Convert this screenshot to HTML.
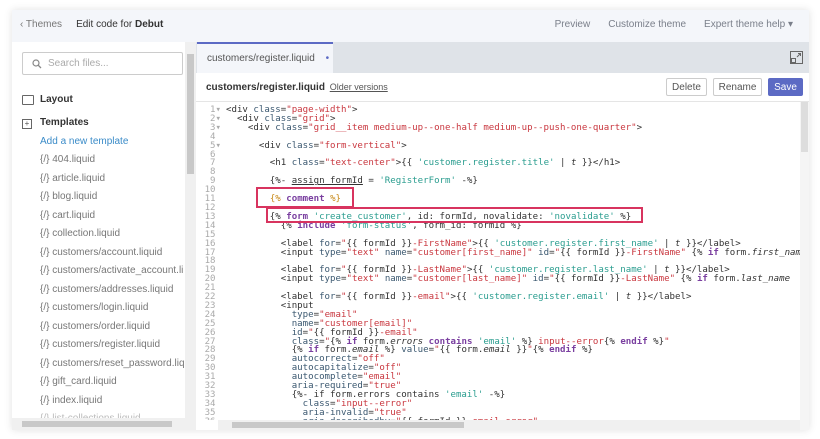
<!DOCTYPE html>
<html><head><meta charset="utf-8"><style>
*{box-sizing:border-box;margin:0;padding:0}
body{width:820px;height:439px;background:#fff;font-family:"Liberation Sans",sans-serif;position:relative;overflow:hidden}
.frame{position:absolute;left:12px;top:10px;width:797px;height:420px;background:#f4f6fa;box-shadow:0 0 8px rgba(0,0,0,.12);overflow:hidden}
.hdr{position:absolute;left:0;top:0;width:797px;height:32px;font-size:10px;color:#333}
.hdr .l{position:absolute;left:8px;top:9px}
.hdr .l span.t{color:#777;margin-right:14px}
.hdr .r{position:absolute;right:16px;top:9px;color:#7a7f8a}
.hdr .r span{margin-left:18px}
.side{position:absolute;left:0;top:32px;width:173px;height:388px;background:#fff;font-size:10px;color:#777}
.search{position:absolute;left:10px;top:10px;width:161px;height:23px;border:1px solid #ccc;border-radius:2px;color:#aaa;padding:5px 0 0 25px}
.it{position:absolute;left:28px;white-space:nowrap}
.sb{position:absolute;left:173px;top:32px;width:11px;height:388px;background:#f0f0f0}
.ed{position:absolute;left:184px;top:32px;width:613px;height:388px;background:#fff}
.tabs{position:absolute;left:0;top:0;width:613px;height:31px;background:#dfe3e8}
.tab{position:absolute;left:1px;top:0;width:136px;height:31px;background:#f4f6fa;border-top:2px solid #5c6ac4;font-size:10px;color:#555;padding:9px 0 0 10px}
.tb{position:absolute;left:0;top:31px;width:613px;height:29px;background:#fff;border-bottom:1px solid #e5e5e5}
.btn{position:absolute;top:5px;height:18px;border:1px solid #ccc;border-radius:2px;font-size:10px;color:#555;padding:3px 0 0;text-align:center}
.code{position:absolute;left:0;top:60px;width:604px;height:318px;overflow:hidden;font-family:"DejaVu Sans Mono",monospace;font-size:9.1px;line-height:8.9px;white-space:pre;color:#333}
.gut{position:absolute;left:0;top:4px;width:25px;color:#aaa;text-align:right}
.src{position:absolute;left:30px;top:4px}
.s{color:#c9373f}.q{color:#2a9d8f}.k{color:#7a3fa0;font-weight:bold}.a{color:#3b5870}.c{color:#c88a1a}
.rb{position:absolute;border:2px solid #d8345f}
</style></head><body>
<div class="frame">
 <div class="hdr"><div class="l"><span class="t">&#8249; Themes</span>Edit code for <b>Debut</b></div>
 <div class="r"><span>Preview</span><span>Customize theme</span><span>Expert theme help &#9662;</span></div></div>
 <div class="side">
  <div class="search"><svg style="position:absolute;left:9px;top:6px" width="10" height="10" viewBox="0 0 10 10"><circle cx="4" cy="4" r="3" fill="none" stroke="#888" stroke-width="1.2"/><line x1="6.3" y1="6.3" x2="9" y2="9" stroke="#888" stroke-width="1.3"/></svg>Search files...</div>
  <div style="position:absolute;left:10px;top:53px;width:12px;height:10px;border:1px solid #666;border-radius:1px"></div>
  <div class="it" style="top:52px;color:#333;font-weight:bold">Layout</div>
  <div style="position:absolute;left:10px;top:77px;width:10px;height:10px;border:1px solid #666;font-size:8px;line-height:8px;text-align:center;color:#555">+</div>
  <div class="it" style="top:75px;color:#333;font-weight:bold">Templates</div>
  <div class="it" style="top:94px;color:#3a8bc8">Add a new template</div>
  <div class="it" style="top:112px">{/} 404.liquid</div>
  <div class="it" style="top:131px">{/} article.liquid</div>
  <div class="it" style="top:149px">{/} blog.liquid</div>
  <div class="it" style="top:168px">{/} cart.liquid</div>
  <div class="it" style="top:186px">{/} collection.liquid</div>
  <div class="it" style="top:205px">{/} customers/account.liquid</div>
  <div class="it" style="top:223px">{/} customers/activate_account.li</div>
  <div class="it" style="top:242px">{/} customers/addresses.liquid</div>
  <div class="it" style="top:260px">{/} customers/login.liquid</div>
  <div class="it" style="top:279px">{/} customers/order.liquid</div>
  <div class="it" style="top:297px">{/} customers/register.liquid</div>
  <div class="it" style="top:316px">{/} customers/reset_password.liq</div>
  <div class="it" style="top:334px">{/} gift_card.liquid</div>
  <div class="it" style="top:353px">{/} index.liquid</div>
  <div class="it" style="top:371px;color:#bbb">{/} list-collections.liquid</div>
  <div style="position:absolute;left:0;top:376px;width:173px;height:12px;background:#f0f0f0"><div style="position:absolute;left:10px;top:3px;width:150px;height:6px;background:#c8c8c8"></div></div>
 </div>
 <div class="sb"><div style="position:absolute;left:2px;top:12px;width:7px;height:120px;background:#c8c8c8"></div></div>
 <div class="ed">
  <div class="tabs"><div class="tab">customers/register.liquid <span style="color:#5c6ac4;margin-left:8px">&#8226;</span></div>
   <svg style="position:absolute;left:594px;top:9px" width="13" height="13" viewBox="0 0 13 13"><rect x="0.5" y="0.5" width="12" height="12" fill="none" stroke="#666"/><rect x="1.5" y="7.5" width="4" height="4" fill="none" stroke="#666"/><path d="M7 6L10.5 2.5M8 2.5h2.5V5" fill="none" stroke="#666"/></svg></div>
  <div class="tb">
   <div style="position:absolute;left:10px;top:9px;font-size:10px;font-weight:bold;color:#333">customers/register.liquid <span style="font-weight:normal;text-decoration:underline;color:#555;font-size:9px;margin-left:2px">Older versions</span></div>
   <div class="btn" style="left:470px;width:41px">Delete</div>
   <div class="btn" style="left:517px;width:49px">Rename</div>
   <div class="btn" style="left:572px;width:35px;background:#5c6ac4;color:#fff;border-color:#5c6ac4">Save</div>
  </div>
  <div class="code">
<div class="gut">1&#9662;
2&#9662;
3&#9662;
4 
5&#9662;
6 
7 
8 
9 
10 
11 
12 
13 
14 
15 
16 
17 
18 
19 
20 
21 
22 
23 
24 
25 
26 
27 
28 
29 
30 
31 
32 
33 
34 
35 
36 
37 </div>
<div class="src">&lt;div <span class="a">class</span>=<span class="s">"page-width"</span>&gt;
  &lt;div <span class="a">class</span>=<span class="s">"grid"</span>&gt;
    &lt;div <span class="a">class</span>=<span class="s">"grid__item medium-up--one-half medium-up--push-one-quarter"</span>&gt;

      &lt;div <span class="a">class</span>=<span class="s">"form-vertical"</span>&gt;

        &lt;h1 <span class="a">class</span>=<span class="s">"text-center"</span>&gt;{{ <span class="q">'customer.register.title'</span> | <i>t</i> }}&lt;/h1&gt;

        {%- <u>assign formId</u> = <span class="q">'RegisterForm'</span> -%}

        <span class="c">{%</span> <span class="k">comment</span> <span class="c">%}</span>

        {% <span class="k">form</span> <span class="q">'create_customer'</span>, id: formId, novalidate: <span class="q">'novalidate'</span> %}
          {% <span class="k">include</span> <span class="q">'form-status'</span>, form_id: formId %}

          &lt;label <span class="a">for</span>=<span class="s">"</span>{{ formId }}<span class="s">-FirstName"</span>&gt;{{ <span class="q">'customer.register.first_name'</span> | <i>t</i> }}&lt;/label&gt;
          &lt;input <span class="a">type</span>=<span class="s">"text"</span> <span class="a">name</span>=<span class="s">"customer[first_name]"</span> <span class="a">id</span>=<span class="s">"</span>{{ formId }}<span class="s">-FirstName"</span> {% <span class="k">if</span> form.<i>first_name</i>

          &lt;label <span class="a">for</span>=<span class="s">"</span>{{ formId }}<span class="s">-LastName"</span>&gt;{{ <span class="q">'customer.register.last_name'</span> | <i>t</i> }}&lt;/label&gt;
          &lt;input <span class="a">type</span>=<span class="s">"text"</span> <span class="a">name</span>=<span class="s">"customer[last_name]"</span> <span class="a">id</span>=<span class="s">"</span>{{ formId }}<span class="s">-LastName"</span> {% <span class="k">if</span> form.<i>last_name</i>

          &lt;label <span class="a">for</span>=<span class="s">"</span>{{ formId }}<span class="s">-email"</span>&gt;{{ <span class="q">'customer.register.email'</span> | <i>t</i> }}&lt;/label&gt;
          &lt;input
            <span class="a">type</span>=<span class="s">"email"</span>
            <span class="a">name</span>=<span class="s">"customer[email]"</span>
            <span class="a">id</span>=<span class="s">"</span>{{ formId }}<span class="s">-email"</span>
            <span class="a">class</span>=<span class="s">"</span>{% <span class="k">if</span> form.<i>errors</i> <span class="k">contains</span> <span class="q">'email'</span> %}<span class="s"> input--error</span>{% <span class="k">endif</span> %}<span class="s">"</span>
            {% <span class="k">if</span> form.<i>email</i> %} <span class="a">value</span>=<span class="s">"</span>{{ form.<i>email</i> }}<span class="s">"</span>{% <span class="k">endif</span> %}
            <span class="a">autocorrect</span>=<span class="s">"off"</span>
            <span class="a">autocapitalize</span>=<span class="s">"off"</span>
            <span class="a">autocomplete</span>=<span class="s">"email"</span>
            <span class="a">aria-required</span>=<span class="s">"true"</span>
            {%- if form.errors contains <span class="q">'email'</span> -%}
              <span class="a">class</span>=<span class="s">"input--error"</span>
              <span class="a">aria-invalid</span>=<span class="s">"true"</span>
              <span class="a">aria-describedby</span>=<span class="s">"</span>{{ formId }}<span class="s">-email-error"</span>
            {%- endif -%}</div>
  <div class="rb" style="left:60px;top:85px;width:98px;height:21px"></div>
  <div class="rb" style="left:70px;top:105px;width:377px;height:16px"></div>
  </div>
  <div style="position:absolute;left:604px;top:60px;width:9px;height:328px;background:#f5f5f5"><div style="position:absolute;left:1px;top:0;width:7px;height:50px;background:#ddd"></div></div>
  <div style="position:absolute;left:22px;top:378px;width:582px;height:10px;background:#f0f0f0"><div style="position:absolute;left:14px;top:2px;width:232px;height:6px;background:#c8c8c8"></div></div>
 </div>
</div>
</body></html>
